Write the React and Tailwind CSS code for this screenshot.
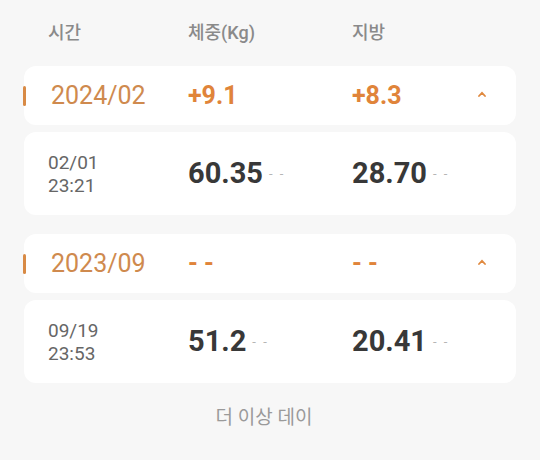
import React from 'react';

const groups = [
  {
    month: '2024/02',
    weightDiff: '+9.1',
    fatDiff: '+8.3',
    records: [{ date: '02/01', time: '23:21', weight: '60.35', fat: '28.70' }],
  },
  {
    month: '2023/09',
    weightDiff: '- -',
    fatDiff: '- -',
    records: [{ date: '09/19', time: '23:53', weight: '51.2', fat: '20.41' }],
  },
];

const font = { fontFamily: "Roboto, 'Noto Sans CJK KR', sans-serif" };

const Chevron = () => (
  <svg width="8" height="6" viewBox="0 0 8 6" className="text-[#e0893f]">
    <path d="M1 5 L4 1.8 L7 5" fill="none" stroke="currentColor" strokeWidth="1.8" strokeLinecap="round" />
  </svg>
);

const Value = ({ value }) => (
  <div className="flex items-center">
    <span className="text-[29px] font-bold text-[#383838] leading-none">{value}</span>
    <span className="ml-[6px] text-[13px] text-[#b5b5b5] leading-none tracking-[2px]">- -</span>
  </div>
);

const MonthGroup = ({ group }) => (
  <div className="flex flex-col gap-[7px]">
    {/* Month summary */}
    <div className="relative h-[59px] bg-white rounded-xl grid grid-cols-[140px_164px_1fr_auto] items-center pl-6 pr-[30px]">
      <div className="absolute left-[-1px] top-[20px] w-[3px] h-[20px] rounded-full bg-[#d88a45]" />
      <div className="pl-[3px] text-[25px] text-[#cf8a4e] leading-none">{group.month}</div>
      <div className="text-[25px] font-bold text-[#e0843a] leading-none">{group.weightDiff}</div>
      <div className="text-[25px] font-bold text-[#e0843a] leading-none">{group.fatDiff}</div>
      <div className="pb-[4px]">
        <Chevron />
      </div>
    </div>

    {/* Records */}
    {group.records.map((r) => (
      <div
        key={r.date + r.time}
        className="h-[83px] bg-white rounded-xl grid grid-cols-[140px_164px_1fr] items-center pl-6"
      >
        <div className="text-[19px] text-[#666666] leading-[23px]">
          <div>{r.date}</div>
          <div>{r.time}</div>
        </div>
        <Value value={r.weight} />
        <Value value={r.fat} />
      </div>
    ))}
  </div>
);

export default function App() {
  return (
    <div className="min-h-[460px] w-[540px] bg-[#f7f7f7] px-6" style={font}>
      {/* Column header */}
      <div className="h-[66px] grid grid-cols-[140px_164px_1fr] items-center pl-6 pb-[2px] text-[18px] font-medium text-[#8a8a8a]">
        <div>시간</div>
        <div>체중(Kg)</div>
        <div>지방</div>
      </div>

      <div className="flex flex-col gap-[19px]">
        {groups.map((g) => (
          <MonthGroup key={g.month} group={g} />
        ))}
      </div>

      <div className="pt-[21px] pr-3 text-center text-[19px] text-[#9a9a9a]">더 이상 데이</div>
    </div>
  );
}
